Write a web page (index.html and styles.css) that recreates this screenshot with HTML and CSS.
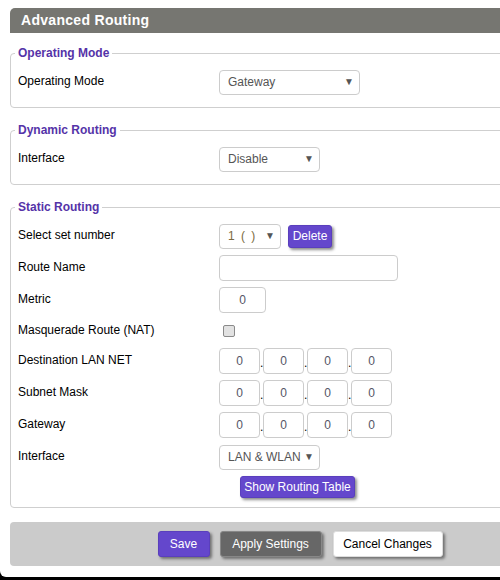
FILE: index.html
```html
<html lang="en">
<head>
  <meta charset="UTF-8">
  <meta name="viewport" content="width=device-width, initial-scale=1.0">
  <title>Advanced Routing</title>
  <link rel="stylesheet" href="styles.css">
</head>
<body>
  <div class="page">
    <h1 class="title">Advanced Routing</h1>

    <fieldset class="group">
      <legend>Operating Mode</legend>
      <div class="row">
        <span class="label">Operating Mode</span>
        <span class="select wide"><select><option>Gateway</option></select></span>
      </div>
    </fieldset>

    <fieldset class="group">
      <legend>Dynamic Routing</legend>
      <div class="row">
        <span class="label">Interface</span>
        <span class="select mid"><select><option>Disable</option></select></span>
      </div>
    </fieldset>

    <fieldset class="group">
      <legend>Static Routing</legend>
      <div class="row">
        <span class="label">Select set number</span>
        <span class="select small set"><select><option>1 ( )</option></select></span>
        <button class="btn purple delete">Delete</button>
      </div>
      <div class="row">
        <span class="label">Route Name</span>
        <input class="text name" type="text">
      </div>
      <div class="row">
        <span class="label">Metric</span>
        <input class="text metric" type="text" value="0">
      </div>
      <div class="row short">
        <span class="label">Masquerade Route (NAT)</span>
        <input class="check" type="checkbox">
      </div>
      <div class="row">
        <span class="label">Destination LAN NET</span>
        <span class="ip" data-ip="dest"></span>
      </div>
      <div class="row">
        <span class="label">Subnet Mask</span>
        <span class="ip" data-ip="mask"></span>
      </div>
      <div class="row">
        <span class="label">Gateway</span>
        <span class="ip" data-ip="gw"></span>
      </div>
      <div class="row">
        <span class="label">Interface</span>
        <span class="select mid"><select><option>LAN &amp; WLAN</option></select></span>
      </div>
      <div class="center-row">
        <button class="btn purple table-btn">Show Routing Table</button>
      </div>
    </fieldset>

    <div class="actions">
      <button class="btn purple save">Save</button>
      <button class="btn grey apply">Apply Settings</button>
      <button class="btn white cancel">Cancel Changes</button>
    </div>
  </div>

  <script>
    const ipFields = document.querySelectorAll(".ip");

    ipFields.forEach(field => {
      for (let i = 0; i < 4; i++) {
        const box = document.createElement("input");
        box.type = "text";
        box.className = "text octet";
        box.value = "0";
        field.appendChild(box);
        if (i < 3) {
          const dot = document.createElement("span");
          dot.className = "dot";
          dot.textContent = ".";
          field.appendChild(dot);
        }
      }
    });
  </script>
</body>
</html>
```

FILE: styles.css
```css
html,
body {
  margin: 0;
  overflow: hidden;
  background-color: #000;
}

body {
  font-family: "Liberation Sans", Arial, sans-serif;
  font-size: 12px;
  color: #000;
}

.page {
  width: 600px;
  height: 577px;
  background-color: #fff;
  border-bottom-left-radius: 6px;
  padding: 8px 10px 0 10px;
  box-sizing: border-box;
}

.title {
  margin: 0;
  height: 25px;
  line-height: 25px;
  padding-left: 11px;
  background-color: #767671;
  color: #fff;
  font-size: 14px;
  font-weight: bold;
  letter-spacing: 0.3px;
  border-radius: 5px 0 0 0;
}

.group {
  margin: 13px 0 0 0;
  padding: 6px 7px 9px 7px;
  border: 1px solid #cfcfcf;
  border-radius: 4px;
}

.group + .group {
  margin-top: 15px;
}

.group legend {
  padding: 0 3px;
  margin-left: -3px;
  color: #5533a8;
  font-weight: bold;
  font-size: 12px;
  line-height: 14px;
}

.row {
  display: flex;
  align-items: center;
  height: 32px;
}

.row.short {
  height: 29px;
}

.label {
  width: 201px;
  flex-shrink: 0;
  margin-top: -2px;
}

.select {
  position: relative;
  display: inline-block;
}

.select select {
  appearance: none;
  -webkit-appearance: none;
  height: 25px;
  padding: 0 16px 0 8px;
  border: 1px solid #ccc;
  border-radius: 4px;
  background-color: #fff;
  color: #555;
  font-family: "Liberation Sans", Arial, sans-serif;
  font-size: 12px;
  width: 100%;
}

.select::after {
  content: "\25BC";
  position: absolute;
  right: 6px;
  top: 6px;
  font-size: 10px;
  color: #555;
  pointer-events: none;
}

.wide {
  width: 141px;
}

.mid {
  width: 101px;
}

.small {
  width: 62px;
}

.set select {
  color: #7a6a40;
  letter-spacing: 1.5px;
}

.text {
  box-sizing: border-box;
  height: 26px;
  border: 1px solid #ccc;
  border-radius: 4px;
  background-color: #fff;
  color: #556;
  font-family: "Liberation Sans", Arial, sans-serif;
  font-size: 12px;
  text-align: center;
  padding: 0;
}

.name {
  width: 179px;
}

.metric {
  width: 47px;
}

.check {
  appearance: none;
  -webkit-appearance: none;
  width: 12px;
  height: 12px;
  margin: 0 0 0 4px;
  border: 1px solid #8a8a8a;
  border-radius: 2px;
  background-color: #e2e2e2;
}

.ip {
  display: flex;
  align-items: center;
}

.octet {
  width: 41px;
}

.dot {
  width: 3px;
  text-align: center;
  align-self: flex-end;
  line-height: 14px;
  padding-bottom: 4px;
}

.center-row {
  display: flex;
  justify-content: center;
  margin-top: 3px;
  padding-right: 5px;
}

.btn {
  font-family: "Liberation Sans", Arial, sans-serif;
  font-size: 12px;
  border-radius: 3px;
  cursor: pointer;
  box-shadow: 2px 2px 3px rgba(0, 0, 0, 0.45);
}

.purple {
  background-color: #6447cc;
  color: #fff;
  border: 1px solid #5a3fbd;
}

.grey {
  background-color: #676767;
  color: #fff;
  border: 1px solid #888;
}

.white {
  background-color: #fff;
  color: #000;
  border: 1px solid #ddd;
}

.delete {
  height: 23px;
  width: 44px;
  margin-left: 7px;
  padding: 0;
  font-size: 12px;
}

.table-btn {
  height: 22px;
  width: 115px;
  padding: 0;
}

.actions {
  display: flex;
  justify-content: center;
  align-items: center;
  gap: 10px;
  height: 44px;
  margin-top: 14px;
  background-color: #cbcbcb;
  border-radius: 4px;
}

.actions .btn {
  height: 26px;
}

.save {
  width: 52px;
}

.apply {
  width: 102px;
}

.cancel {
  width: 110px;
  margin-left: 1px;
}
```
